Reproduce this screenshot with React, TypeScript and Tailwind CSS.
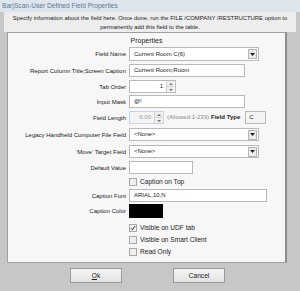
import React from "react";

const Arrow = () => (
  <div className="w-[9px] h-[10px] mr-[1px] border border-[#b5b5b5] bg-[#ececec] flex items-center justify-center">
    <svg width="5" height="3" viewBox="0 0 5 3">
      <path d="M0 0h5L2.5 3z" fill="#222" />
    </svg>
  </div>
);

const Spin = () => (
  <div className="w-[8px] h-[11px] flex flex-col border-l border-[#d0d0d0]">
    <div className="flex-1 flex items-center justify-center bg-[#eeeeee] border-b border-[#d0d0d0]">
      <svg width="4" height="2" viewBox="0 0 4 2">
        <path d="M0 2h4L2 0z" fill="#777" />
      </svg>
    </div>
    <div className="flex-1 flex items-center justify-center bg-[#eeeeee]">
      <svg width="4" height="2" viewBox="0 0 4 2">
        <path d="M0 0h4L2 2z" fill="#777" />
      </svg>
    </div>
  </div>
);

const Check = ({ checked }: { checked?: boolean }) => (
  <div className="w-[8px] h-[8px] border border-[#a8a8a8] bg-[#f0f0f0] flex items-center justify-center">
    {checked && (
      <svg width="6" height="6" viewBox="0 0 6 6">
        <path d="M0.8 3.2l1.6 1.6L5.2 1" stroke="#333" strokeWidth="1" fill="none" />
      </svg>
    )}
  </div>
);

const Row = ({
  label,
  h,
  mt,
  children,
}: {
  label?: string;
  h: string;
  mt: string;
  children: React.ReactNode;
}) => (
  <div className={`flex items-center ${h} ${mt}`}>
    <div className="w-[121px] shrink-0 text-right pr-[3px] leading-none whitespace-nowrap">{label}</div>
    {children}
  </div>
);

const Box = ({ w, children }: { w: string; children?: React.ReactNode }) => (
  <div className={`${w} h-full border border-[#b9b9b9] bg-white flex items-center px-[4px]`}>
    {children}
  </div>
);

const Select = ({ value }: { value: string }) => (
  <div className="w-[130px] h-full border border-[#b9b9b9] bg-white flex items-center justify-between pl-[4px]">
    <span>{value}</span>
    <Arrow />
  </div>
);

const CheckRow = ({ text, checked, mt }: { text: string; checked?: boolean; mt: string }) => (
  <Row h="h-[10px]" mt={mt}>
    <div className="flex items-center gap-[3px] text-[6.6px]">
      <Check checked={checked} />
      <span>{text}</span>
    </div>
  </Row>
);

export default function App() {
  return (
    <div
      className="w-[300px] h-[291px] bg-[#c7c7c7] text-[6px] text-[#222] overflow-hidden flex flex-col"
      style={{ fontFamily: "'Liberation Sans', Arial, sans-serif" }}
    >
      {/* title bar */}
      <div className="h-[12px] bg-[#dfe5ec] text-[#5a77a0] text-[6.6px] flex items-center pl-[2px]">
        Bar|Scan-User Defined Field Properties
      </div>

      {/* description */}
      <div className="h-[20px] bg-[#ededed] mx-[4px] text-center text-[5.9px] leading-[9px] pt-[2px] whitespace-nowrap">
        Specify information about the field here. Once done, run the FILE /COMPANY /RESTRUCTURE option to
        <br />
        permanently add this field to the table.
      </div>

      {/* panel */}
      <div className="ml-[7px] w-[280px] h-[231px] bg-[#f7f7f7] border border-[#a0a0a0] border-r-2 border-r-[#8e8e8e] flex flex-col">
        <div className="text-center text-[7px] mt-[4px] leading-none">Properties</div>

        <Row label="Field Name" h="h-[14px]" mt="mt-[3px]">
          <Select value="Current Room C(6)" />
        </Row>

        <Row label="Report Column Title;Screen Caption" h="h-[13px]" mt="mt-[3px]">
          <Box w="w-[116px]">Current Room;Room</Box>
        </Row>

        <Row label="Tab Order" h="h-[13px]" mt="mt-[3px]">
          <div className="w-[47px] h-full border border-[#b9b9b9] bg-white flex items-center justify-end pr-[1px]">
            <span className="mr-[3px]">1</span>
            <Spin />
          </div>
        </Row>

        <Row label="Input Mask" h="h-[13px]" mt="mt-[2px]">
          <Box w="w-[116px]">@!</Box>
        </Row>

        <Row label="Field Length" h="h-[13px]" mt="mt-[3px]">
          <div className="w-[35px] h-full border border-[#c8d3e0] bg-[#f4f4f4] flex items-center justify-end pr-[1px] text-[#999]">
            <span className="mr-[3px]">6.00</span>
            <Spin />
          </div>
          <span className="ml-[3px] text-[#8a8a8a]">(Allowed:1-239)</span>
          <span className="ml-[2px] font-bold">Field Type</span>
          <div className="ml-[5px] w-[21px] h-full border border-[#b9b9b9] bg-[#f4f4f4] flex items-center px-[3px]">
            C
          </div>
        </Row>

        <Row label="Legacy Handheld Computer File Field" h="h-[13px]" mt="mt-[4px]">
          <Select value="<None>" />
        </Row>

        <Row label="'Move' Target Field" h="h-[13px]" mt="mt-[4px]">
          <Select value="<None>" />
        </Row>

        <Row label="Default Value" h="h-[13px]" mt="mt-[3px]">
          <Box w="w-[64px]" />
        </Row>

        <CheckRow text="Caption on Top" mt="mt-[3px]" />

        <Row label="Caption Font" h="h-[13px]" mt="mt-[2px]">
          <Box w="w-[138px]">ARIAL,10,N</Box>
        </Row>

        <Row label="Caption Color" h="h-[14px]" mt="mt-[2px]">
          <div className="w-[34px] h-full bg-black" />
        </Row>

        <CheckRow text="Visible on UDF tab" checked mt="mt-[5px]" />
        <CheckRow text="Visible on Smart Client" mt="mt-[2px]" />
        <CheckRow text="Read Only" mt="mt-[2px]" />
      </div>

      {/* buttons */}
      <div className="flex mt-[5px] pl-[70px] gap-[51px]">
        <button className="w-[52px] h-[15px] border border-[#9a9a9a] bg-gradient-to-b from-[#f6f6f6] to-[#e2e2e2] text-[6.6px] text-[#222]">
          <span className="underline">O</span>k
        </button>
        <button className="w-[52px] h-[15px] border border-[#9a9a9a] bg-gradient-to-b from-[#f6f6f6] to-[#e2e2e2] text-[6.6px] text-[#222]">
          Cancel
        </button>
      </div>
    </div>
  );
}
